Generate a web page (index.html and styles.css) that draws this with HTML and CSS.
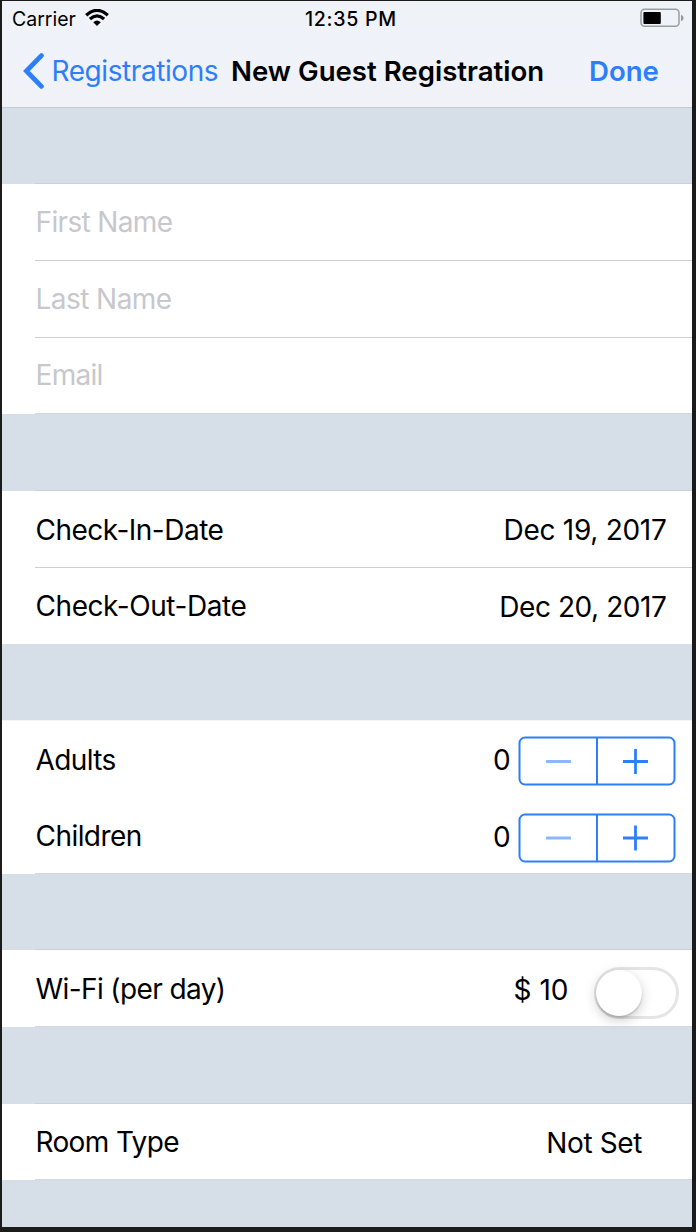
FILE: index.html
```html
<!DOCTYPE html>
<html lang="en">
<head>
<meta charset="utf-8">
<title>New Guest Registration</title>
<link rel="stylesheet" href="styles.css">
</head>
<body>
<main class="screen">
  <header class="header">
    <div class="status">
      <span class="carrier">Carrier</span>
      <svg class="wifi" width="24" height="17" viewBox="0 0 24 17"><g fill="none" stroke="#000" stroke-width="3.3"><path d="M1.2 6.2Q12-3.4 22.8 6.2"/><path d="M4.9 10.1Q12 3.7 19.1 10.1"/></g><path d="M8.2 13.2Q12 9.8 15.8 13.2L12 17Z"/></svg>
      <span class="time">12:35 PM</span>
      <svg class="battery" width="44" height="20" viewBox="0 0 44 20"><rect x="1" y="1.2" width="38" height="17" rx="3.5" fill="none" stroke="#9b9da1" stroke-width="1.5"/><rect x="3.4" y="4" width="17.4" height="12" rx="1" fill="#000"/><path d="M41 6.7Q43.6 7.5 43.6 10T41 13.3Z" fill="#96989c"/></svg>
    </div>
    <nav class="navbar">
      <svg class="chevron" width="22" height="36" viewBox="0 0 22 36"><path d="M18.4 2.6L3.4 18L18.4 33.4" fill="none" stroke="#2d7ff9" stroke-width="4.8" stroke-linecap="round" stroke-linejoin="miter"/></svg>
      <span class="back">Registrations</span>
      <h1 class="title">New Guest Registration</h1>
      <span class="done">Done</span>
    </nav>
  </header>

  <section class="group names">
    <div class="row lined"><span class="placeholder first">First Name</span></div>
    <div class="row lined"><span class="placeholder last">Last Name</span></div>
    <div class="row short"><span class="placeholder email">Email</span></div>
  </section>

  <section class="group dates">
    <div class="row lined"><span class="label checkin">Check-In-Date</span><span class="value date-in">Dec 19, 2017</span></div>
    <div class="row short"><span class="label checkout">Check-Out-Date</span><span class="value date-out">Dec 20, 2017</span></div>
  </section>

  <section class="group guests">
    <div class="row"><span class="label adults">Adults</span><span class="count">0</span>
      <svg class="stepper" width="158" height="50" viewBox="0 0 158 50"><rect x="1.5" y="1.5" width="155" height="47" rx="5.5"/><path d="M79 1.5v47"/><path class="plus" d="M105 25.5h25M117.5 13v25"/><path class="minus" d="M28 25.5h25"/></svg>
    </div>
    <div class="row"><span class="label children">Children</span><span class="count">0</span>
      <svg class="stepper" width="158" height="50" viewBox="0 0 158 50"><rect x="1.5" y="1.5" width="155" height="47" rx="5.5"/><path d="M79 1.5v47"/><path class="plus" d="M105 25h25M117.5 12.5v25"/><path class="minus" d="M28 25h25"/></svg>
    </div>
  </section>

  <section class="group wireless">
    <div class="row"><span class="label wifi-label">Wi-Fi (per day)</span><span class="value price">$ 10</span><span class="switch"><span class="knob"></span></span></div>
  </section>

  <section class="group room">
    <div class="row short"><span class="label room-label">Room Type</span><span class="value notset">Not Set</span></div>
  </section>
</main>
</body>
</html>
```
FILE: styles.css
```css
* { box-sizing: border-box; }
body {
  margin: 0;
  width: 696px;
  height: 1232px;
  background: #1b1b1c;
  padding: 1px 4px 5px 2px;
  overflow: hidden;
  font-family: Inter, "Liberation Sans", sans-serif;
  font-size: 28px;
  color: #000;
}
svg { display: block; flex: none; }
span, h1 { white-space: nowrap; }
.screen { height: 1226px; background: #d6dee8; }
.header {
  height: 107px;
  background: linear-gradient(#eff3f8, #f0f2f8);
  border-bottom: 1px solid #c5cad3;
}
.status {
  display: flex;
  align-items: flex-start;
  height: 34px;
  font-size: 19.5px;
  line-height: 36px;
}
.carrier { width: 74px; padding-left: 10px; }
.wifi { margin: 8px 0 0 9px; }
.time { width: 94px; margin-left: 196px; font-size: 19.6px; font-weight: 500; letter-spacing: .7px; }
.battery { margin: 7px 8px 0 auto; }
.navbar {
  display: flex;
  align-items: center;
  height: 72px;
  line-height: 72px;
}
.chevron { margin-left: 21px; }
.back { width: 180px; padding-left: 6.5px; color: #2d7ff9; letter-spacing: -.42px; line-height: 73px; }
.title { width: 340px; margin: 0; padding-left: 6px; font-size: 27.6px; font-weight: 600; }
.done { padding-left: 24px; color: #2d7ff9; font-size: 27.6px; font-weight: 600; }

.group { position: relative; margin-top: 76px; background: #fff; }
.dates, .room { margin-top: 77px; }
.group::before, .group::after {
  content: "";
  position: absolute;
  left: 33px;
  right: 0;
  height: 1px;
  background: #cbd1d9;
}
.group::before { top: -1px; }
.group::after { bottom: 0; background: #d3d7de; }
.dates::after { display: none; }
.guests::before { top: 0; left: 0; background: #f5f6f8; }
.row {
  display: flex;
  align-items: flex-start;
  height: 77px;
  padding-left: 33.5px;
  line-height: 76px;
}
.short { height: 76px; }
.lined { background: linear-gradient(#cfcfd2, #cfcfd2) 33px 100% / 657px 1px no-repeat; }
.placeholder { color: #c7c7cc; line-height: 76px; }
.first { letter-spacing: -.65px; }
.last { letter-spacing: -.55px; }
.email { letter-spacing: -.7px; line-height: 74px; }
.label { flex: 1; }
.checkin { letter-spacing: -.5px; line-height: 78px; }
.checkout { letter-spacing: -.43px; }
.adults { letter-spacing: -.6px; }
.children { letter-spacing: -.55px; }
.wifi-label { letter-spacing: -.6px; line-height: 79px; }
.room-label { letter-spacing: -.64px; line-height: 77px; }
.adults { line-height: 80px; }
.children { line-height: 78px; }
.value { margin-right: 25.5px; line-height: 78px; }
.date-in { letter-spacing: -.28px; line-height: 79px; }
.date-out { letter-spacing: -.42px; }
.price { line-height: 80px; }
.notset { margin-right: 50px; letter-spacing: -.38px; line-height: 78px; }
.count { margin-right: 8px; line-height: 80px; letter-spacing: -.6px; }
.stepper { margin: 16px 16px 0 0; fill: none; stroke: #2d7ff9; stroke-width: 2; }
.plus { stroke-width: 2.8; }
.minus { stroke: #8ab8fc; stroke-width: 3; }
.switch {
  width: 85px;
  height: 52px;
  margin: 17px 13px 0 0;
  border: 3px solid #e5e5e5;
  border-radius: 26px;
}
.knob {
  display: block;
  width: 46px;
  height: 46px;
  margin-left: -1px;
  border-radius: 50%;
  background: #fff;
  box-shadow: 0 5px 12px rgba(0,0,0,.15), 0 2px 2px rgba(0,0,0,.15), 0 0 18px rgba(0,0,0,.05);
}
```
